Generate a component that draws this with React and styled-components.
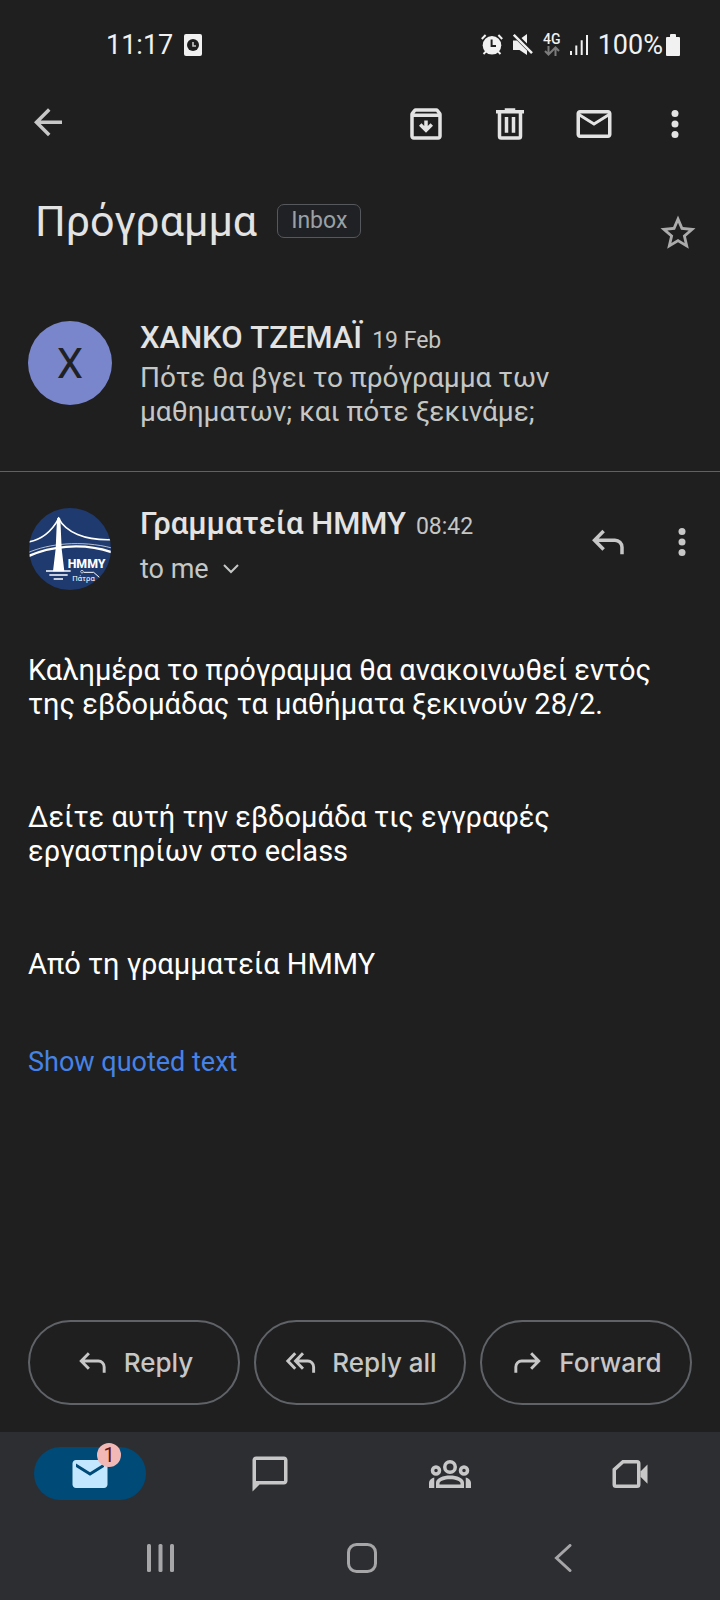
import React from "react";
import styled, { createGlobalStyle } from "styled-components";

const GlobalStyle = createGlobalStyle`
  *, *::before, *::after { box-sizing: border-box; }
  body {
    margin: 0;
    background: #1f1f1f;
    color: #e3e3e3;
    font-family: Roboto, "Noto Sans", sans-serif;
  }
  button {
    margin: 0;
    padding: 0;
    border: 0;
    background: none;
    color: inherit;
    font: inherit;
    cursor: pointer;
  }
  svg { display: block; flex: none; }
  h1, h2, p { margin: 0; font-weight: 400; }
`;

const Screen = styled.div`
  display: flex;
  flex-direction: column;
  min-height: 100vh;
`;

const StatusBar = styled.div`
  display: flex;
  align-items: center;
  justify-content: space-between;
  height: 89px;
  padding: 0 40px 0 106px;
  font-size: 27px;
  line-height: 34px;
  color: #f1f1f1;
`;

const StatusGroup = styled.div`
  display: flex;
  align-items: center;
  gap: ${(p) => p.$gap}px;
`;

const Network = styled.div`
  display: flex;
  flex-direction: column;
  align-items: center;
  gap: 1px;
  width: 16px;
  font-size: 14px;
  font-weight: 500;
  line-height: 12px;
`;

const Toolbar = styled.header`
  display: flex;
  align-items: center;
  justify-content: space-between;
  height: 70px;
  padding: 0 24px 0 27px;
`;

const ToolGroup = styled.div`
  display: flex;
  gap: ${(p) => p.$gap}px;
`;

const IconButton = styled.button`
  display: flex;
  align-items: center;
  justify-content: center;
  width: 42px;
  height: 42px;
  color: ${(p) => p.$color || "#e3e3e3"};
`;

const Subject = styled.div`
  display: flex;
  align-items: flex-start;
  padding: 34px 21px 32px 35px;
`;

const SubjectTitle = styled.div`
  display: flex;
  flex: 1;
  align-items: center;
  gap: 20px;
`;

const Heading = styled.h1`
  font-size: 43px;
  line-height: 56px;
`;

const Label = styled.span`
  padding: 0 13px;
  border: 1px solid #55585c;
  border-radius: 7px;
  background: #202124;
  color: #9aa0a6;
  font-size: 23px;
  line-height: 32px;
`;

const StarSlot = styled.div`
  padding-top: 19px;
`;

const Message = styled.section`
  display: flex;
  gap: 28px;
  padding: 35px 17px ${(p) => p.$bottom}px 28px;
  border-bottom: ${(p) => (p.$divided ? "1px solid #5f6164" : "0")};
`;

const Avatar = styled.div`
  display: flex;
  flex: none;
  align-items: center;
  justify-content: center;
  width: 84px;
  height: 84px;
  border-radius: 50%;
  background: ${(p) => p.$fill || "none"};
  color: #202124;
  font-size: 42px;
`;

const MessageText = styled.div`
  display: flex;
  flex: 1;
  flex-direction: column;
  align-items: flex-start;
  gap: ${(p) => p.$gap}px;
  min-width: 0;
`;

const SenderLine = styled.div`
  display: flex;
  align-items: baseline;
  gap: 10px;
  line-height: 34px;
`;

const Sender = styled.h2`
  font-size: 31px;
  font-weight: 500;
`;

const Time = styled.time`
  color: #c4c7c5;
  font-size: 23px;
`;

const Snippet = styled.p`
  padding-right: 90px;
  color: #c4c7c5;
  font-size: 28px;
  line-height: 34px;
`;

const Recipient = styled.button`
  display: flex;
  align-items: center;
  gap: 14px;
  color: #c4c7c5;
  font-size: 27px;
  line-height: 34px;
`;

const MessageActions = styled.div`
  display: flex;
  gap: 32px;
  padding-top: 14px;
`;

const Body = styled.article`
  display: flex;
  flex: 1;
  flex-direction: column;
  align-items: flex-start;
  gap: 79px;
  padding: 0 28px 48px;
  color: #fff;
  font-size: 29px;
  line-height: 34px;
`;

const Closing = styled.div`
  display: flex;
  flex-direction: column;
  align-items: flex-start;
  gap: 64px;
`;

const QuotedLink = styled.a`
  color: #4683e6;
  font-size: 27px;
  text-decoration: none;
`;

const ReplyBar = styled.div`
  display: grid;
  grid-template-columns: repeat(3, 1fr);
  gap: 14px;
  padding: 0 28px 27px;
`;

const ReplyButton = styled.button`
  display: flex;
  align-items: center;
  justify-content: center;
  gap: 14px;
  height: 85px;
  border: 2px solid #5f6368;
  border-radius: 43px;
  color: #c7c7c7;
  font-family: Inter, Roboto, sans-serif;
  font-size: 26px;
  font-weight: 500;
  white-space: nowrap;
`;

const Footer = styled.footer`
  background: #2d2e32;
`;

const Tabs = styled.nav`
  display: grid;
  grid-template-columns: repeat(4, 1fr);
  place-items: center;
  height: 83px;
`;

const Tab = styled.button`
  position: relative;
  display: flex;
  align-items: center;
  justify-content: center;
  width: 112px;
  height: 53px;
  border-radius: 27px;
  background: ${(p) => (p.$active ? "#004a77" : "transparent")};
  color: ${(p) => (p.$active ? "#c2e7ff" : "#c7c7c7")};
`;

const Badge = styled.span`
  position: absolute;
  top: -4px;
  left: 63px;
  width: 24px;
  height: 24px;
  border-radius: 50%;
  background: #f2b8b5;
  color: #601410;
  font-size: 20px;
  line-height: 24px;
  text-align: center;
`;

const SystemNav = styled.nav`
  display: grid;
  grid-template-columns: repeat(3, 1fr);
  place-items: center;
  height: 85px;
  padding: 0 56px 0 60px;
`;

const Glyph = ({ size = 42, children, box = "0 0 24 24" }) => (
  <svg width={size} height={size} viewBox={box} fill="currentColor" aria-hidden="true">
    {children}
  </svg>
);

const line = { fill: "none", stroke: "currentColor", strokeWidth: 2 };

const MoreIcon = () => (
  <Glyph>
    <circle cx="12" cy="6" r="2" />
    <circle cx="12" cy="12" r="2" />
    <circle cx="12" cy="18" r="2" />
  </Glyph>
);

const ReplyIcon = ({ size }) => (
  <Glyph size={size}>
    <path {...line} d="M9.5 5.7 4.3 11l5.2 5.3M4.3 11H16a4 4 0 0 1 4 4v4" />
  </Glyph>
);

const ReplyAllIcon = () => (
  <Glyph size={35}>
    <path
      {...line}
      d="M8.4 5.7 3.3 11l5.1 5.3M13.7 5.7 8.6 11l5.1 5.3M8.6 11H17a4 4 0 0 1 4 4v4"
    />
  </Glyph>
);

const ForwardIcon = () => (
  <Glyph size={35}>
    <path {...line} d="M14.5 5.7l5.2 5.3-5.2 5.3M19.7 11H8a4 4 0 0 0-4 4v4" />
  </Glyph>
);

const BridgeLogo = () => (
  <svg width="84" height="84" viewBox="24 21 252 252" role="img" aria-label="ΗΜΜΥ Πάτρα">
    <clipPath id="disc">
      <circle cx="150" cy="147" r="123" />
    </clipPath>
    <g clipPath="url(#disc)">
      <rect x="24" y="21" width="252" height="252" fill="#1f3a6e" />
      <g fill="none" stroke="#fff">
        <path strokeWidth="5" d="M24 126C64 120 96 92 116 56c22 40 76 66 160 63" />
        <path strokeWidth="7" d="M24 169c60-28 160-44 252-12" />
        <path strokeWidth="2" d="M24 158c60-27 160-38 252-14" />
        <path strokeWidth="4" d="M78 213h74M88 225h55M101 237h28" />
        <circle cx="186" cy="215" r="4" strokeWidth="2" />
        <path strokeWidth="3" d="M191 217h30l18 16" />
      </g>
      <path fill="#fff" d="M111 56l5-6 5 6 4 90 8 68h-34l8-68z" />
      <g fill="#fff" fontFamily="Roboto, sans-serif">
        <text x="143" y="203" fontSize="37" fontWeight="800">
          ΗΜΜΥ
        </text>
        <text x="157" y="243" fontSize="23" fontWeight="400">
          Πάτρα
        </text>
      </g>
    </g>
  </svg>
);

export default function App() {
  return (
    <Screen>
      <GlobalStyle />
      <StatusBar>
        <StatusGroup $gap={11}>
          <span>11:17</span>
          <svg width="18" height="22" viewBox="0 0 18 22">
            <rect width="18" height="22" rx="2" fill="#f1f1f1" />
            <circle cx="9" cy="11" r="6" fill="#1f1f1f" />
            <path d="M9 8v4h3" fill="none" stroke="#c8c8c8" strokeWidth="1.6" />
          </svg>
        </StatusGroup>
        <StatusGroup $gap={10}>
          <svg width="22" height="22" viewBox="0 0 22 22" stroke="#f1f1f1" strokeWidth="2">
            <circle cx="11" cy="11.3" r="9.3" fill="#f1f1f1" stroke="none" />
            <path d="M.8 5 4.6 1M17.4 1l3.8 4M2.5 20l2.6-2.6M19.5 20l-2.6-2.6" />
            <path d="M10.6 5.6v6.3H15" fill="none" stroke="#1f1f1f" />
          </svg>
          <svg width="21" height="22" viewBox="0 0 21 22" fill="#f1f1f1">
            <path d="M0 6.5h4l10 10V21l-7.5-5H0zM8.5 4 14 0v9.600z" />
            <path d="M.8.8 19 19.2" stroke="#f1f1f1" strokeWidth="2.4" />
          </svg>
          <Network>
            <span>4G</span>
            <svg width="16" height="10" viewBox="0 0 16 10" fill="none" stroke="#7c7c7c" strokeWidth="2">
              <path d="M4.5 0v8M1 5l3.5 3.5L8 5M11.5 10V1.5M8 5l3.5-3.5L15 5" />
            </svg>
          </Network>
          <svg width="18" height="22" viewBox="0 0 18 22" fill="#f1f1f1">
            <path d="M0 17h2v4H0zM5.3 11.5h2V21h-2zM10.7 6.3h2V21h-2zM16 1h2v20h-2z" />
          </svg>
          <StatusGroup $gap={3}>
            <span>100%</span>
            <svg width="14" height="22" viewBox="0 0 14 22" fill="#f1f1f1">
              <rect x="4" width="6" height="4" rx="1" />
              <rect y="3" width="14" height="19" rx="1" />
            </svg>
          </StatusGroup>
        </StatusGroup>
      </StatusBar>

      <Toolbar>
        <IconButton $color="#c7c7c7" aria-label="Back">
          <Glyph box="0 1 24 24">
            <path d="M20 11H7.830l5.590-5.590L12 4l-8 8 8 8 1.410-1.410L7.830 13H20v-2z" />
          </Glyph>
        </IconButton>
        <ToolGroup $gap={39}>
          <ToolGroup $gap={42}>
            <IconButton aria-label="Archive">
              <Glyph>
                <path d="M20.540 5.230l-1.390-1.680C18.880 3.210 18.470 3 18 3H6c-.470 0-.880.210-1.160.550L3.460 5.230C3.170 5.570 3 6.020 3 6.500V19c0 1.100.900 2 2 2h14c1.100 0 2-.900 2-2V6.500c0-.480-.170-.930-.460-1.270zM6.240 5h11.520l.830 1H5.420l.820-1zM5 19V8h14v11H5z" />
                <path d="M13 10h-2v3.170L9.400 11.600 8 13l4 4 4-4-1.400-1.400-1.600 1.570z" />
              </Glyph>
            </IconButton>
            <IconButton aria-label="Delete">
              <Glyph>
                <path d="M9 3v1H4v2h1v13a2 2 0 0 0 2 2h10a2 2 0 0 0 2-2V6h1V4h-5V3H9zM7 6h10v13H7V6zm2 2v9h2V8H9zm4 0v9h2V8h-2z" />
              </Glyph>
            </IconButton>
            <IconButton aria-label="Mark as unread">
              <Glyph>
                <path d="M22 6c0-1.100-.900-2-2-2H4c-1.100 0-2 .900-2 2v12c0 1.100.900 2 2 2h16c1.100 0 2-.900 2-2V6zm-2 0l-8 5-8-5h16zm0 12H4V8l8 5 8-5v10z" />
              </Glyph>
            </IconButton>
          </ToolGroup>
          <IconButton aria-label="More options">
            <MoreIcon />
          </IconButton>
        </ToolGroup>
      </Toolbar>

      <Subject>
        <SubjectTitle>
          <Heading>Πρόγραμμα</Heading>
          <Label>Inbox</Label>
        </SubjectTitle>
        <StarSlot>
          <IconButton $color="#ababab" aria-label="Star">
            <Glyph>
              <path d="M22 9.240l-7.190-.620L12 2 9.190 8.630 2 9.240l5.460 4.730L5.820 21 12 17.270 18.180 21l-1.630-7.030L22 9.240zM12 15.400l-3.760 2.270 1-4.280-3.320-2.880 4.380-.380L12 6.100l1.710 4.040 4.380.380-3.320 2.880 1 4.280L12 15.400z" />
            </Glyph>
          </IconButton>
        </StarSlot>
      </Subject>

      <Message $divided $bottom={42}>
        <Avatar $fill="#7986cb">Χ</Avatar>
        <MessageText $gap={3}>
          <SenderLine>
            <Sender>ΧΑΝΚΟ ΤΖΕΜΑΪ</Sender>
            <Time>19 Feb</Time>
          </SenderLine>
          <Snippet>Πότε θα βγει το πρόγραμμα των μαθηματων; και πότε ξεκινάμε;</Snippet>
        </MessageText>
      </Message>

      <Message $bottom={62}>
        <Avatar>
          <BridgeLogo />
        </Avatar>
        <MessageText $gap={8}>
          <SenderLine>
            <Sender>Γραμματεία ΗΜΜΥ</Sender>
            <Time>08:42</Time>
          </SenderLine>
          <Recipient>
            to me
            <svg width="16" height="10" viewBox="0 0 16 10" aria-hidden="true">
              <path {...line} d="M1 1l7 7 7-7" />
            </svg>
          </Recipient>
        </MessageText>
        <MessageActions>
          <IconButton $color="#c7c7c7" aria-label="Reply to message">
            <ReplyIcon />
          </IconButton>
          <IconButton $color="#c7c7c7" aria-label="Message options">
            <MoreIcon />
          </IconButton>
        </MessageActions>
      </Message>

      <Body>
        <p>Καλημέρα το πρόγραμμα θα ανακοινωθεί εντός της εβδομάδας τα μαθήματα ξεκινούν 28/2.</p>
        <p>
          Δείτε αυτή την εβδομάδα τις εγγραφές
          <br />
          εργαστηρίων στο eclass
        </p>
        <Closing>
          <p>Από τη γραμματεία ΗΜΜΥ</p>
          <QuotedLink href="#quoted">Show quoted text</QuotedLink>
        </Closing>
      </Body>

      <ReplyBar>
        <ReplyButton>
          <ReplyIcon size={35} />
          Reply
        </ReplyButton>
        <ReplyButton>
          <ReplyAllIcon />
          Reply all
        </ReplyButton>
        <ReplyButton>
          <ForwardIcon />
          Forward
        </ReplyButton>
      </ReplyBar>

      <Footer>
        <Tabs aria-label="Apps">
          <Tab $active aria-label="Mail">
            <Glyph>
              <path d="M20 4H4c-1.100 0-2 .900-2 2v12c0 1.100.900 2 2 2h16c1.100 0 2-.900 2-2V6c0-1.100-.900-2-2-2zm0 4l-8 5-8-5V6l8 5 8-5v2z" />
            </Glyph>
            <Badge>1</Badge>
          </Tab>
          <Tab aria-label="Chat">
            <Glyph>
              <path d="M20 2H4c-1.100 0-2 .900-2 2v18l4-4h14c1.100 0 2-.900 2-2V4c0-1.100-.900-2-2-2zm0 14H4V4h16v12z" />
            </Glyph>
          </Tab>
          <Tab aria-label="Spaces">
            <Glyph>
              <circle {...line} cx="12" cy="8" r="3" />
              <circle {...line} cx="4" cy="10" r="2" />
              <circle {...line} cx="20" cy="10" r="2" />
              <path
                fillRule="evenodd"
                d="M4 20v-3c0-2.600 4-4.100 8-4.100s8 1.500 8 4.100v3zm2-2h12v-.800c0-1.100-2.800-2.200-6-2.200s-6 1.100-6 2.200z"
              />
              <path d="M0 20v-3c0-1.500 1.300-2.600 3-3v6zM24 20v-3c0-1.500-1.300-2.600-3-3v6z" />
            </Glyph>
          </Tab>
          <Tab aria-label="Meet">
            <Glyph>
              <path {...line} d="M8 5h8a1 1 0 0 1 1 1v12a1 1 0 0 1-1 1H4a1 1 0 0 1-1-1V9.500z" />
              <path d="M22 6.500v11l-4-4v-3z" />
            </Glyph>
          </Tab>
        </Tabs>
        <SystemNav aria-label="System">
          <IconButton $color="#a6a6a8" aria-label="Recent apps">
            <svg width="27" height="28" viewBox="0 0 27 28" fill="currentColor">
              <rect width="4" height="28" rx="1.5" />
              <rect x="11.5" width="4" height="28" rx="1.5" />
              <rect x="23" width="4" height="28" rx="1.5" />
            </svg>
          </IconButton>
          <IconButton $color="#a6a6a8" aria-label="Home">
            <svg width="30" height="30" viewBox="0 0 30 30">
              <rect {...line} x="1.5" y="1.5" width="27" height="27" rx="8" strokeWidth="3" />
            </svg>
          </IconButton>
          <IconButton $color="#a6a6a8" aria-label="System back">
            <svg width="18" height="28" viewBox="0 0 18 28">
              <path {...line} d="M16 1.5 2.5 14 16 26.5" strokeWidth="3" strokeLinecap="round" />
            </svg>
          </IconButton>
        </SystemNav>
      </Footer>
    </Screen>
  );
}
